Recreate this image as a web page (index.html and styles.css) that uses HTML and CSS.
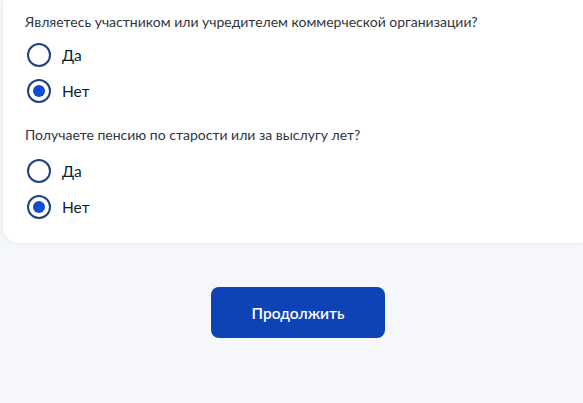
FILE: index.html
```html
<!DOCTYPE html>
<html lang="ru">
<head>
<meta charset="utf-8">
<link rel="stylesheet" href="styles.css">
</head>
<body>
<div class="page">
  <div class="card">
    <div class="question">Являетесь участником или учредителем коммерческой организации?</div>
    <div class="options">
      <label class="option"><span class="radio"></span><span class="label">Да</span></label>
      <label class="option"><span class="radio checked"></span><span class="label">Нет</span></label>
    </div>
    <div class="question q2">Получаете пенсию по старости или за выслугу лет?</div>
    <div class="options opts2">
      <label class="option"><span class="radio"></span><span class="label">Да</span></label>
      <label class="option"><span class="radio checked"></span><span class="label">Нет</span></label>
    </div>
  </div>
  <div class="actions">
    <button class="btn">Продолжить</button>
  </div>
</div>
</body>
</html>
```

FILE: styles.css
```css
html, body {
  margin: 0;
  padding: 0;
  background: #f5f7fb;
  overflow: hidden;
  font-family: Lato, "Noto Sans", sans-serif;
}
.page {
  margin-left: 3px;
  width: 590px;
}
.card {
  margin-top: -12px;
  background: #fff;
  border-radius: 16px;
  box-shadow: 0 1px 4px rgba(40, 60, 100, 0.08);
  padding: 24px 22px 24px 22px;
}
.question {
  font-size: 14px;
  line-height: 20px;
  color: #2f3540;
}
.q2 {
  margin-top: 22px;
}
.options {
  display: flex;
  flex-direction: column;
  gap: 12px;
  margin-top: 11px;
}
.opts2 {
  margin-top: 14px;
}
.option {
  display: flex;
  align-items: center;
  gap: 11px;
  height: 24px;
}
.radio {
  box-sizing: border-box;
  width: 24px;
  height: 24px;
  margin-left: 2px;
  border: 2px solid #22407c;
  border-radius: 50%;
  display: flex;
  align-items: center;
  justify-content: center;
  background: #fff;
}
.radio.checked::after {
  content: "";
  width: 12px;
  height: 12px;
  border-radius: 50%;
  background: #0d4cd3;
}
.label {
  font-size: 15.5px;
  color: #0b1f33;
}
.actions {
  display: flex;
  justify-content: center;
  padding-top: 44px;
}
.btn {
  width: 174px;
  height: 51px;
  border: none;
  border-radius: 8px;
  background: #0d43b5;
  color: #fff;
  font-family: Lato, "Noto Sans", sans-serif;
  font-size: 15.5px;
  font-weight: 600;
}
```
